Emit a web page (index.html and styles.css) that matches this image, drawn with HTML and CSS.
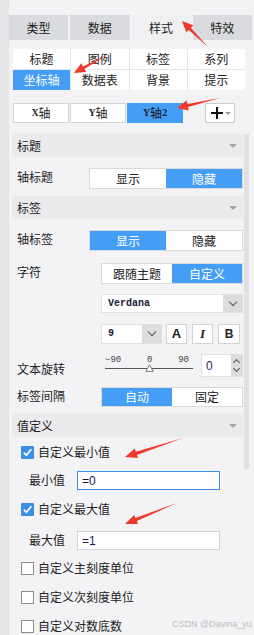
FILE: index.html
```html
<!DOCTYPE html>
<html lang="zh">
  <head>
    <meta charset="UTF-8" />
    <title>样式 - 坐标轴</title>
    <link rel="stylesheet" href="styles.css">
  </head>
  <body>
    <div class="shell">
      <div class="rail"></div>
      <div class="panel">
        <div class="tabs">
          <div class="tab">类型</div>
          <div class="tab">数据</div>
          <div class="tab on">样式</div>
          <div class="tab">特效</div>
        </div>

        <div class="subtabs">
          <div class="sub">标题</div>
          <div class="sub">图例</div>
          <div class="sub">标签</div>
          <div class="sub">系列</div>
          <div class="sub on">坐标轴</div>
          <div class="sub">数据表</div>
          <div class="sub">背景</div>
          <div class="sub">提示</div>
        </div>

        <div class="axes">
          <div class="axis"><span class="latin">X</span>轴</div>
          <div class="axis"><span class="latin">Y</span>轴</div>
          <div class="axis on"><span class="latin">Y</span>轴<span class="latin">2</span></div>
          <div class="plus">
            <svg width="14" height="14" viewBox="0 0 14 14"><path d="M7 1v12M1 7h12" stroke="#111" stroke-width="2"/></svg>
            <span class="mini-caret"></span>
          </div>
        </div>

        <div class="main">
          <div class="settings">
            <div class="head">标题<span class="caret"></span></div>
            <div class="row r-axis-title">
              <div class="lbl">轴标题</div>
              <div class="toggle">
                <div class="half">显示</div>
                <div class="half on">隐藏</div>
              </div>
            </div>

            <div class="head">标签<span class="caret"></span></div>
            <div class="row r-axis-label">
              <div class="lbl">轴标签</div>
              <div class="toggle">
                <div class="half on">显示</div>
                <div class="half">隐藏</div>
              </div>
            </div>
            <div class="row r-gap12">
              <div class="lbl wide">字符</div>
              <div class="toggle">
                <div class="half">跟随主题</div>
                <div class="half on">自定义</div>
              </div>
            </div>
            <div class="row r-gap10 indent">
              <div class="select font-select">
                <div class="value mono">Verdana</div>
                <div class="drop"><span class="chev"></span></div>
              </div>
            </div>
            <div class="row r-gap11 indent">
              <div class="select size-select">
                <div class="value mono">9</div>
                <div class="drop"><span class="chev"></span></div>
              </div>
              <div class="fbtn b-a">A</div>
              <div class="fbtn b-i">I</div>
              <div class="fbtn b-b">B</div>
            </div>
            <div class="row r-rotate">
              <div class="lbl rot">文本旋转</div>
              <div class="slider">
                <div class="ticks"><span>&minus;90</span><span>0</span><span>90</span></div>
                <div class="track"></div>
                <svg class="thumb" width="9" height="8" viewBox="0 0 9 8"><path d="M4.5 0.8L8.2 7.3H0.8Z" fill="#fff" stroke="#777"/></svg>
              </div>
              <div class="spin">
                <div class="value num">0</div>
                <div class="arrows"><span class="chev up"></span><span class="chev"></span></div>
              </div>
            </div>
            <div class="row r-gap10">
              <div class="lbl wide">标签间隔</div>
              <div class="toggle short">
                <div class="half on">自动</div>
                <div class="half">固定</div>
              </div>
            </div>

            <div class="head h-value">值定义<span class="caret"></span></div>
            <div class="check-row c-first">
              <span class="box checked"><svg width="13" height="13" viewBox="0 0 13 13"><path d="M2.8 6.6l2.6 2.7 4.9-6" fill="none" stroke="#fff" stroke-width="1.7"/></svg></span>
              自定义最小值
            </div>
            <div class="field-row">
              <div class="flbl">最小值</div>
              <div class="field focus">=0</div>
            </div>
            <div class="check-row c-next">
              <span class="box checked"><svg width="13" height="13" viewBox="0 0 13 13"><path d="M2.8 6.6l2.6 2.7 4.9-6" fill="none" stroke="#fff" stroke-width="1.7"/></svg></span>
              自定义最大值
            </div>
            <div class="field-row f-max">
              <div class="flbl">最大值</div>
              <div class="field">=1</div>
            </div>
            <div class="check-row c-major"><span class="box"></span>自定义主刻度单位</div>
            <div class="check-row c-minor"><span class="box"></span>自定义次刻度单位</div>
            <div class="check-row c-minor"><span class="box"></span>自定义对数底数</div>
          </div>
          <div class="scrollbar"><div class="bar"></div></div>
        </div>
      </div>
    </div>

    <!-- annotation arrows drawn on top of the panel -->
    <svg class="marks" width="254" height="635" viewBox="0 0 254 635">
      <g fill="#ef3a2b">
        <polygon points="208,47 190.9,27.7 193.3,25.3 182,21 186.3,32.3 188.7,29.9"/>
        <polygon points="107,55 82.9,66.4 81.3,63.3 74,73 86.1,72.1 84.4,69.05"/>
        <polygon points="220,98 187.4,104 186.6,100.6 177,108 188.8,110.4 188,107"/>
        <polygon points="183,438 135.9,451.7 134.8,448.5 125,457 138,458.1 136.9,454.9"/>
        <polygon points="177,503 135.5,517.9 134.2,514.9 125,524 138,524.1 136.7,521.1"/>
      </g>
    </svg>
    <div class="watermark">CSDN @Davina_yu</div>
  </body>
</html>
```

FILE: styles.css
```css
body {
  margin: 0;
  width: 254px;
  height: 635px;
  overflow: hidden;
  position: relative;
  background-color: #f3f3f6;
  font-family: "Noto Sans CJK SC", "Noto Sans", sans-serif;
  font-size: 12px;
  line-height: 14px;
  color: #222;
}
.shell {
  display: flex;
  height: 635px;
}
.rail {
  width: 9px;
  background-color: #e6e6e8;
}
.panel {
  flex: 1;
  padding-top: 15px;
}

/* top tabs */
.tabs {
  display: grid;
  grid-template-columns: repeat(4, 1fr);
  gap: 2px;
  width: 243px;
  height: 25px;
}
.tab {
  background-color: #dadbde;
  display: flex;
  align-items: center;
  justify-content: center;
  font-size: 12px;
}
.tab.on {
  background-color: #f0f0f2;
}

/* sub tabs */
.subtabs {
  margin: 9px 0 0 4px;
  width: 232px;
  display: grid;
  grid-template-columns: repeat(4, 1fr);
  gap: 1px;
  background-color: #e6e6e8;
}
.sub {
  background-color: #fff;
  height: 20px;
  display: flex;
  align-items: center;
  justify-content: center;
}
.sub.on {
  background-color: #459ef5;
  color: #fff;
}

/* axis selector */
.axes {
  display: flex;
  margin: 13px 0 0 4px;
  height: 20px;
}
.axis {
  width: 56px;
  margin-right: 1px;
  box-sizing: border-box;
  border: 1px solid #d6d6d6;
  background-color: #fff;
  display: flex;
  align-items: center;
  justify-content: center;
}
.axis.on {
  background-color: #459ef5;
  border-color: #459ef5;
  color: #111;
}
.latin {
  font-family: "Liberation Serif", serif;
  font-size: 10px;
  font-weight: bold;
  color: #223;
}
.plus {
  margin-left: 21px;
  width: 30px;
  box-sizing: border-box;
  border: 1px solid #cfcfcf;
  background-color: #fff;
  display: flex;
  align-items: center;
  justify-content: center;
  gap: 1px;
}
.mini-caret {
  border-left: 3px solid transparent;
  border-right: 3px solid transparent;
  border-top: 3px solid #999;
}

/* settings column */
.main {
  display: flex;
  margin: 11px 0 0 3px;
}
.settings {
  width: 231px;
}
.scrollbar {
  width: 5px;
  margin-left: 1px;
}
.bar {
  height: 336px;
  background-color: #e1e1e3;
  border-radius: 0 0 3px 3px;
}
.head {
  height: 23px;
  background-color: #ebebed;
  display: flex;
  align-items: center;
  justify-content: space-between;
  padding: 0 5px;
}
.caret {
  border-left: 4px solid transparent;
  border-right: 4px solid transparent;
  border-top: 4px solid #a5a5a5;
  margin-right: 1px;
}
.h-value {
  margin-top: 7px;
}
.row {
  display: flex;
  align-items: center;
  padding-left: 5px;
}
.indent {
  padding-left: 89px;
}
.r-axis-title {
  margin: 11px 0 7px;
}
.r-axis-label {
  margin-top: 11px;
}
.r-gap12 {
  margin-top: 12px;
}
.r-gap10 {
  margin-top: 10px;
}
.r-gap11 {
  margin-top: 11px;
}
.lbl {
  width: 72px;
  margin-top: -3px;
}
.lbl.wide {
  width: 84px;
}
.toggle {
  flex: 1;
  display: flex;
  height: 21px;
  box-sizing: border-box;
  border: 1px solid #d9d9d9;
  background-color: #fff;
}
.toggle.short {
  height: 20px;
}
.half {
  flex: 1;
  display: flex;
  align-items: center;
  justify-content: center;
}
.half.on {
  background-color: #459ef5;
  color: #fff;
}

/* selects */
.select {
  display: flex;
  box-sizing: border-box;
  background-color: #fff;
  border: 1px solid #e2e2e2;
}
.font-select {
  flex: 1;
  height: 19px;
}
.size-select {
  width: 61px;
  height: 20px;
}
.value {
  flex: 1;
  display: flex;
  align-items: center;
  padding-left: 6px;
}
.mono {
  font-family: "Liberation Mono", monospace;
  font-size: 10px;
  font-weight: bold;
  color: #1a1a3a;
}
.drop {
  width: 19px;
  background-color: #dcdcde;
  display: flex;
  align-items: center;
  justify-content: center;
}
.chev {
  width: 5px;
  height: 5px;
  border-right: 1px solid #555;
  border-bottom: 1px solid #555;
  transform: translateY(-2px) rotate(45deg);
}
.chev.up {
  transform: translateY(2px) rotate(-135deg);
}
.fbtn {
  width: 21px;
  height: 20px;
  margin-left: 5px;
  box-sizing: border-box;
  border: 1px solid #d3d3d3;
  background-color: #fff;
  display: flex;
  align-items: center;
  justify-content: center;
  color: #222;
}
.b-a {
  margin-left: 4px;
  font-family: "Liberation Sans", sans-serif;
  font-weight: bold;
  font-size: 13px;
}
.b-i {
  font-family: "Liberation Serif", serif;
  font-style: italic;
  font-weight: bold;
  font-size: 13px;
}
.b-b {
  width: 22px;
  font-family: "Liberation Sans", sans-serif;
  font-weight: bold;
  font-size: 12px;
}

/* rotation slider */
.r-rotate {
  margin-top: 10px;
  height: 23px;
}
.lbl.rot {
  width: 88px;
  margin-top: 6px;
}
.slider {
  width: 88px;
  height: 23px;
  position: relative;
}
.ticks {
  display: flex;
  justify-content: space-between;
  padding-right: 4px;
  font-family: "Liberation Mono", monospace;
  font-size: 9px;
  line-height: 10px;
  color: #444;
  margin-top: 1px;
}
.track {
  margin-top: 3px;
  height: 1px;
  background-color: #555;
}
.thumb {
  position: absolute;
  left: 40px;
  top: 10px;
}
.spin {
  margin-left: 8px;
  flex: 1;
  height: 23px;
  display: flex;
  box-sizing: border-box;
  border: 1px solid #e2e2e2;
  background-color: #fff;
}
.num {
  padding-left: 4px;
  font-family: "Liberation Sans", sans-serif;
  font-size: 12px;
  color: #3a1a6a;
}
.arrows {
  width: 11px;
  background-color: #dcdcde;
  display: flex;
  flex-direction: column;
  align-items: center;
  justify-content: space-around;
}
.arrows .chev {
  width: 4px;
  height: 4px;
}

/* value definition */
.check-row {
  display: flex;
  align-items: center;
  height: 16px;
  padding-left: 9px;
}
.c-first {
  margin-top: 7px;
}
.c-next {
  margin-top: 11px;
}
.c-major {
  margin-top: 10px;
}
.c-minor {
  margin-top: 13px;
}
.box {
  width: 13px;
  height: 13px;
  margin-right: 4px;
  box-sizing: border-box;
  border: 1px solid #8e8e8e;
  background-color: #fff;
  display: flex;
}
.box.checked {
  border: 0;
  background-color: #3b8ee8;
  border-radius: 1px;
}
.field-row {
  display: flex;
  align-items: center;
  margin-top: 11px;
  padding-left: 17px;
}
.f-max {
  margin-top: 14px;
}
.flbl {
  width: 48px;
  margin-top: -2px;
}
.field {
  width: 143px;
  height: 19px;
  box-sizing: border-box;
  border: 1px solid #d4d4d4;
  background-color: #fff;
  padding-left: 4px;
  display: flex;
  align-items: center;
  font-family: "Liberation Sans", sans-serif;
  font-size: 12px;
  color: #1a1a4a;
}
.field.focus {
  border-color: #3d8fe8;
}

/* overlays */
.marks {
  position: absolute;
  left: 0;
  top: 0;
  pointer-events: none;
}
.watermark {
  position: absolute;
  left: 172px;
  top: 617px;
  white-space: nowrap;
  font-family: "Liberation Sans", sans-serif;
  font-size: 9px;
  color: #bdbdc0;
}
```
